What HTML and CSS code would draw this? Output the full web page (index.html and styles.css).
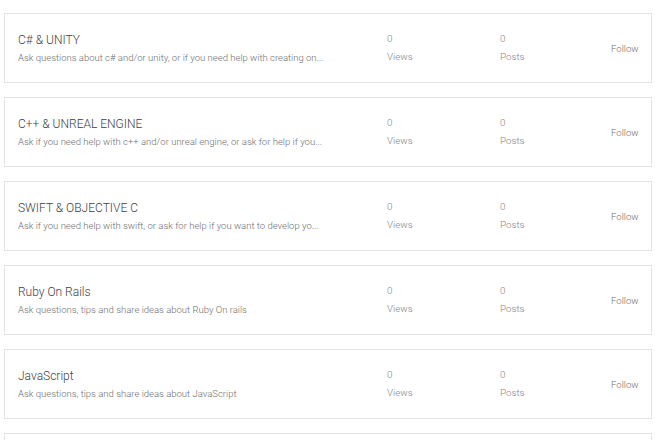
FILE: index.html
```html
<!DOCTYPE html>
<html>
<head>
<meta charset="utf-8">
<link rel="stylesheet" href="styles.css">
</head>
<body>
<div class="list">
  <div class="card">
    <div class="main">
      <div class="title">C# &amp; UNITY</div>
      <div class="desc">Ask questions about c# and/or unity, or if you need help with creating on...</div>
    </div>
    <div class="stat"><div class="num">0</div><div class="label">Views</div></div>
    <div class="stat stat-posts"><div class="num">0</div><div class="label">Posts</div></div>
    <div class="follow">Follow</div>
  </div>
  <div class="card">
    <div class="main">
      <div class="title">C++ &amp; UNREAL ENGINE</div>
      <div class="desc">Ask if you need help with c++ and/or unreal engine, or ask for help if you...</div>
    </div>
    <div class="stat"><div class="num">0</div><div class="label">Views</div></div>
    <div class="stat stat-posts"><div class="num">0</div><div class="label">Posts</div></div>
    <div class="follow">Follow</div>
  </div>
  <div class="card">
    <div class="main">
      <div class="title">SWIFT &amp; OBJECTIVE C</div>
      <div class="desc">Ask if you need help with swift, or ask for help if you want to develop yo...</div>
    </div>
    <div class="stat"><div class="num">0</div><div class="label">Views</div></div>
    <div class="stat stat-posts"><div class="num">0</div><div class="label">Posts</div></div>
    <div class="follow">Follow</div>
  </div>
  <div class="card">
    <div class="main">
      <div class="title">Ruby On Rails</div>
      <div class="desc">Ask questions, tips and share ideas about Ruby On rails</div>
    </div>
    <div class="stat"><div class="num">0</div><div class="label">Views</div></div>
    <div class="stat stat-posts"><div class="num">0</div><div class="label">Posts</div></div>
    <div class="follow">Follow</div>
  </div>
  <div class="card">
    <div class="main">
      <div class="title">JavaScript</div>
      <div class="desc">Ask questions, tips and share ideas about JavaScript</div>
    </div>
    <div class="stat"><div class="num">0</div><div class="label">Views</div></div>
    <div class="stat stat-posts"><div class="num">0</div><div class="label">Posts</div></div>
    <div class="follow">Follow</div>
  </div>
  <div class="card card-partial"></div>
</div>
</body>
</html>
```
FILE: styles.css
```css
html, body {
  margin: 0;
  padding: 0;
  background: #ffffff;
  overflow: hidden;
  height: 440px;
}
body {
  font-family: Roboto, "Noto Sans", sans-serif;
  font-weight: 300;
}
.list {
  padding: 13px 0 0 4px;
  display: flex;
  flex-direction: column;
  gap: 14px;
}
.card {
  box-sizing: border-box;
  width: 648px;
  height: 70px;
  flex-shrink: 0;
  border: 1px solid #e3e3e3;
  display: flex;
  align-items: center;
  padding: 0 13px 0 13px;
}
.main {
  flex: 1;
  min-width: 0;
}
.title {
  font-size: 12px;
  line-height: 15px;
  color: #3f3f3f;
}
.desc {
  font-size: 9.5px;
  line-height: 12px;
  margin-top: 4px;
  color: #6f6f6f;
  white-space: nowrap;
}
.stat {
  width: 113px;
  font-size: 9.8px;
  color: #858585;
}
.stat-posts {
  width: 111px;
}
.stat .num {
  line-height: 12px;
}
.stat .label {
  line-height: 12px;
  margin-top: 6px;
}
.follow {
  width: 27px;
  font-size: 9.6px;
  color: #707070;
  text-align: right;
  white-space: nowrap;
}
```
